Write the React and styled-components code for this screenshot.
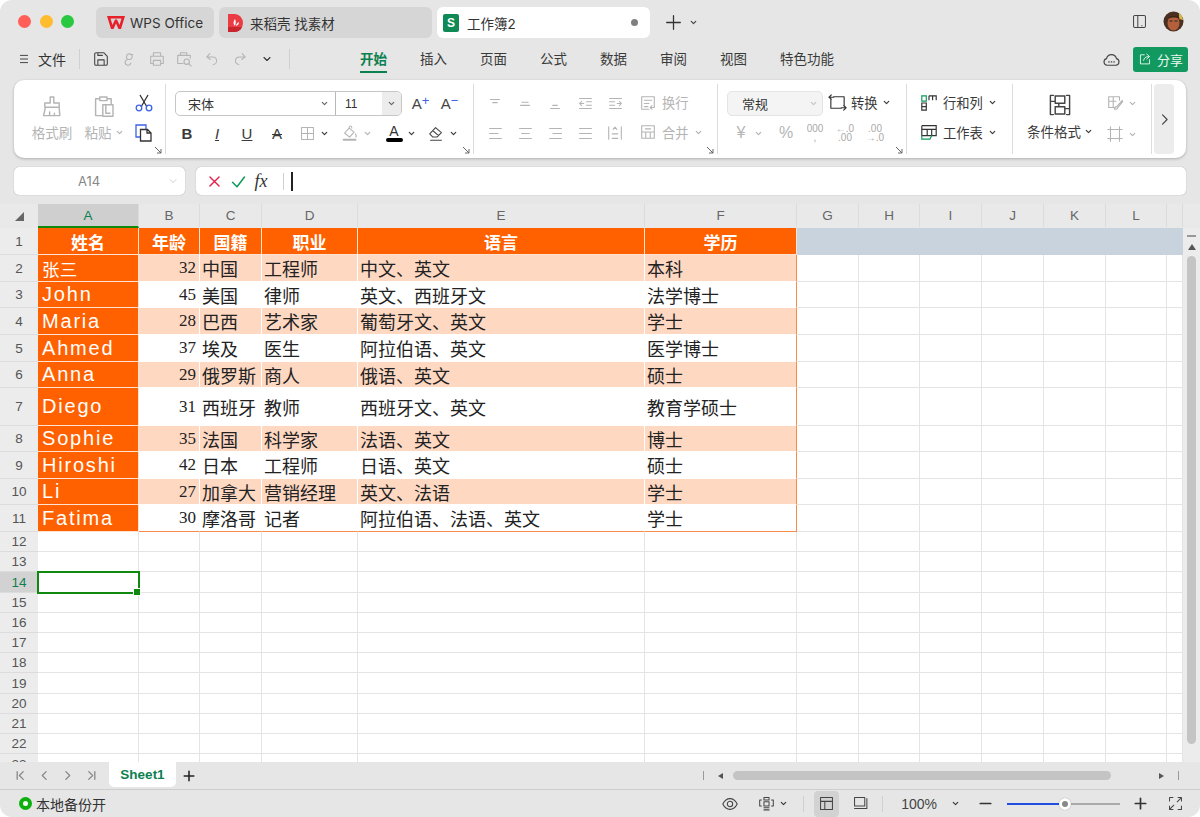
import React from 'react';
import styled, { createGlobalStyle } from 'styled-components';

const CJK = '"Inter", "Noto Sans CJK SC", sans-serif';

const GlobalStyle = createGlobalStyle`
  html, body { margin: 0; padding: 0; background: #fff; }
  * { box-sizing: border-box; }
  body { font-family: ${CJK}; color: #333; }
`;

const ICONS = {
  menu: <path d="M4 4h12M4 10h12M4 16h12" />,
  save: <path d="M3 4.500A1.500 1.500 0 0 1 4.500 3H13l4 4v8.500a1.500 1.500 0 0 1-1.500 1.500h-11A1.500 1.500 0 0 1 3 15.500zM6.500 17v-6h7v6M6.500 3v3h5" />,
  link: <path d="M8 9.500a3.200 3.200 0 1 1 3 1h-2a3.200 3.200 0 1 0 3 4M11 5h3" />,
  print: <path d="M6 7V3h8v4M6 15H3V7h14v8h-3M6 11.500h8V17H6z" />,
  preview: <g><path d="M6 6V3h7v3M9 15H3V6h14v3" /><circle cx="13" cy="13" r="3" /><path d="M15.200 15.200L18 18" /></g>,
  undo: <path d="M8 3L4.500 7 8.500 10M4.500 7H11a4.500 4.500 0 0 1 1 9" />,
  redo: <path d="M12 3l3.500 4-4 3M15.500 7H9a4.500 4.500 0 0 0-1 9" />,
  chevron: <path d="M5 7.500l5 5 5-5" />,
  plus: <path d="M10 2v16M2 10h16" />,
  minus: <path d="M2 10h16" />,
  phone: <path d="M8 3H4.500A1.500 1.500 0 0 0 3 4.500v11A1.500 1.500 0 0 0 4.500 17H8M8 3h7.500A1.500 1.500 0 0 1 17 4.500v11a1.500 1.500 0 0 1-1.500 1.500H8zM12.500 15h.5" />,
  cloud: <g><path d="M5.500 16A3.500 3.500 0 0 1 4.800 9.100 5.300 5.300 0 0 1 15.200 9.100 3.500 3.500 0 0 1 14.500 16z" /><path d="M7 12.500h.6M9.700 12.500h.6M12.400 12.500h.6" /></g>,
  share: <path d="M9 4H3.500v13h13v-6M8 12c.5-3.500 3-5.500 7-5.500M12.500 3L16.500 6.500 12.500 10" />,
  brush: <path d="M8.500 2.500h3v5H16v3.500H4V7.500h4.500zM4.500 11l-1.500 7h13.500l-.500-7M8 18v-3M12 18v-2" />,
  paste: <path d="M6.500 4H3v14h6M6.500 2.500h6v3h-6zM12.500 4H16v4M9 9h8.500v9.500H9zM11.500 9v7h3.500" />,
  border: <path d="M3 3h14v14H3zM10 3v14M3 10h14" />,
  fill: <g><path d="M4 10l5-5.500 5.500 4.500-5 5.500z M9 4.500c0-3 3-3 3 0" /><path d="M16 11c1 1.500 1.500 2.500.5 3.500" /><path d="M3 17.500h13" strokeWidth="2.400" /></g>,
  eraser: <path d="M3 11l6.500-7L16 9.500 11 14.500H6.500zM6.500 7.500L13 13M4 18h12" />,
  alignTop: <path d="M5 5h10M7.500 8.500h5" />,
  alignMid: <path d="M6.500 8h7M5 11.500h10" />,
  alignBot: <path d="M7.500 11.500h5M5 15h10" />,
  outdent: <path d="M3 4h14M3 16h14M11 8h6M11 12h6M8 10H3M5.500 7.500L3 10l2.500 2.500" />,
  indent: <path d="M3 4h14M3 16h14M3 8h6M3 12h6M12 10h5M14.500 7.500L17 10l-2.500 2.500" />,
  left: <path d="M3 4h14M3 10h10M3 16h14" />,
  center: <path d="M3 4h14M5.500 10h9M3 16h14" />,
  right: <path d="M3 4h14M7 10h10M3 16h14" />,
  justify: <path d="M3 4h14M3 10h14M3 16h14" />,
  distribute: <path d="M3 3v14M17 3v14M7 16h6M7 11h6M8 6l2-2.500L12 6" />,
  wrap: <path d="M3 3h14v9M3 3v14h8M6 7h8M6 10.500h5M6 14h4M17 12v3h-4M14.500 13l-2 2 2 2" />,
  merge: <path d="M3 3h14v14H3zM3 10h14M7.500 10v7M12.500 10v7M7 6.500h6" />,
  convert: <path d="M6 4h11v10M14 16H3V6M3.500 2L1 4.500l2.500 2M16.500 18l2.500-2.500-2.500-2.500M1 4.500h5M14 15.500h5" />,
  cond: <path d="M4.500 2H2v16h2.500M15.500 2H18v16h-2.500M6 2.500h8v6H6zM6 11.500h8v6H6zM2 7h4M14 13h4M9 8.500v3" />,
  styleBrush: <path d="M3 3h12v4M3 3v12h6M3 8h8M8 3v12M18 7l-6 7c-1.500 0-2.500 1.500-2.500 3 2 0 3.500-.500 4-2.500l5-6z" />,
  frame: <path d="M5 2v16M15 2v16M2 5h16M2 15h16" />,
  next: <path d="M7 3l7 7-7 7" />,
  eye: <g><path d="M2 10c2-4 5-6 8-6s6 2 8 6c-2 4-5 6-8 6s-6-2-8-6z" /><circle cx="10" cy="10" r="3" /></g>,
  focus: <path d="M7 3h6v3H7zM7 8h6v5H7zM7 15h6M4 6H2v7h2M16 6h2v7h-2M7 17.500h6" />,
  normal: <path d="M3 3h14v14H3zM3 7.500h14M8 7.500V17" />,
  pageView: <path d="M3 3h12v10H3zM17.500 4v12H3" />,
  expand: <path d="M3 7V3h4M13 3h4v4M3 13v4h4M13 17h4v-4M12 8l5-5M8 12l-5 5" />,
  first: <path d="M4 3v14M15 3L8 10l7 7" />,
  prev: <path d="M13 3l-7 7 7 7" />,
  last: <path d="M16 3v14M5 3l7 7-7 7" />,
  cross: <path d="M3 3l14 14M17 3L3 17" />,
  check: <path d="M2 11l6 6L18 4" />,
};

const Glyph = styled.svg`
  flex: none;
  width: ${(p) => p.$s}px;
  height: ${(p) => p.$s}px;
  color: ${(p) => p.$c};
  fill: none;
  stroke: currentColor;
  stroke-width: ${(p) => p.$w};
  stroke-linecap: round;
  stroke-linejoin: round;
`;

const Icon = ({ name, s = 18, c = '#555', w = 1.2 }) => (
  <Glyph viewBox="0 0 20 20" $s={s} $c={c} $w={w}>{ICONS[name]}</Glyph>
);

const OFF = '#b4b4b4';
const ON = '#3a3a3a';

const Caret = ({ c = ON }) => <Icon name="chevron" s={9} c={c} w={2.6} />;

/* window */
const Window = styled.div`
  width: 1200px;
  height: 817px;
  background: #e6e6e6;
  border-radius: 12px;
  overflow: hidden;
  display: flex;
  flex-direction: column;
`;
const Spacer = styled.span`
  flex: none;
  width: ${(p) => p.$w}px;
`;

/* title bar */
const TitleBar = styled.header`
  height: 46px;
  flex: none;
  display: flex;
  align-items: flex-start;
  padding: 7px 16px 0 18px;
`;
const Lights = styled.div`
  display: flex;
  gap: 8.5px;
  margin: 8px 22px 0 0;
`;
const Light = styled.span`
  width: 13px;
  height: 13px;
  border-radius: 50%;
  background: ${(p) => p.$c};
`;
const Tabs = styled.div`
  display: flex;
  gap: 5px;
`;
const Tab = styled.div`
  width: ${(p) => p.$w}px;
  height: 31px;
  border-radius: 6px;
  background: ${(p) => (p.$active ? '#fff' : '#d6d6d6')};
  display: flex;
  align-items: center;
  gap: ${(p) => p.$g}px;
  padding-left: ${(p) => p.$pl}px;
  font-size: 13.5px;
  color: #333;
`;
const SheetBadge = styled.span`
  width: 16px;
  height: 18px;
  border-radius: 2px;
  background: #0f8a55;
  color: #fff;
  font: bold 12px "Liberation Sans", sans-serif;
  display: flex;
  align-items: center;
  justify-content: center;
`;
const TabDot = styled.span`
  width: 7px;
  height: 7px;
  border-radius: 50%;
  background: #808080;
  margin-left: auto;
  margin-right: 12px;
`;
const NewTab = styled.div`
  display: flex;
  align-items: center;
  gap: 7px;
  height: 31px;
  margin-left: 15px;
`;
const TitleRight = styled.div`
  margin-left: auto;
  display: flex;
  align-items: center;
  gap: 15px;
  height: 29px;
`;

/* menu bar */
const MenuBar = styled.nav`
  height: 30px;
  flex: none;
  display: flex;
  align-items: center;
  padding: 0 12px 4px 18px;
`;
const FileMenu = styled.div`
  display: flex;
  align-items: center;
  gap: 8px;
  font-size: 14px;
  width: 61px;
`;
const BarSep = styled.span`
  width: 1px;
  height: ${(p) => p.$h || 20}px;
  background: #d0d0d0;
  flex: none;
  margin-left: ${(p) => p.$ml || 0}px;
`;
const QuickTools = styled.div`
  display: flex;
  align-items: center;
  margin: 0 9px 0 7px;
`;
const QuickSlot = styled.span`
  width: ${(p) => p.$w || 28}px;
  display: flex;
  justify-content: center;
`;
const MenuTabs = styled.div`
  display: flex;
  gap: 33px;
  margin-left: 70px;
  align-self: flex-start;
`;
const MenuTab = styled.div`
  height: 27px;
  line-height: 26px;
  font-size: 13.5px;
  font-weight: ${(p) => (p.$active ? 700 : 400)};
  color: ${(p) => (p.$active ? '#0d8050' : '#3a3a3a')};
  border-bottom: 2px solid ${(p) => (p.$active ? '#0d8050' : 'transparent')};
`;
const MenuRight = styled.div`
  margin-left: auto;
  display: flex;
  align-items: center;
  gap: 12px;
`;
const ShareButton = styled.div`
  width: 55px;
  height: 25px;
  border-radius: 3px;
  background: #11995f;
  color: #e9f7f0;
  font-size: 13px;
  display: flex;
  align-items: center;
  justify-content: center;
  gap: 5px;
`;

/* ribbon */
const Ribbon = styled.section`
  margin: 4px 14px 0;
  height: 78px;
  flex: none;
  background: #fff;
  border-radius: 10px;
  box-shadow: 0 1px 3px rgba(0, 0, 0, 0.25);
  display: flex;
  padding: 4px 0;
`;
const Group = styled.div`
  position: relative;
  width: ${(p) => p.$w}px;
  flex: none;
  border-right: 1px solid #dcdcdc;
  padding: 7px 0 0 ${(p) => p.$pl || 0}px;
  display: flex;
  flex-direction: column;
  gap: 4px;
`;
const GroupRow = styled.div`
  display: flex;
  align-items: center;
  height: ${(p) => p.$h || 25}px;
  margin-left: ${(p) => p.$ml || 0}px;
`;
const Launcher = styled.span`
  position: absolute;
  right: 3px;
  bottom: 0;
  display: flex;
`;
const ClipGroup = styled(Group)`
  flex-direction: row;
  gap: 0;
  padding: 0;
`;
const BigTool = styled.div`
  width: 44px;
  margin-left: ${(p) => p.$ml}px;
  display: flex;
  flex-direction: column;
  align-items: center;
  padding-top: 10px;
  gap: 4px;
  font-size: 13px;
  color: ${OFF};
`;
const LabelRow = styled.div`
  display: flex;
  align-items: center;
  gap: 3px;
  white-space: nowrap;
  font-size: 13.5px;
  color: ${(p) => (p.$on ? ON : OFF)};
`;
const StackTools = styled.div`
  display: flex;
  flex-direction: column;
  align-items: center;
  gap: 10px;
  padding-top: 9px;
  width: 28px;
  margin-left: 4px;
`;
const SideTools = styled.div`
  display: flex;
  flex-direction: column;
  gap: 11px;
  padding-top: 10px;
`;
const FontPicker = styled.div`
  width: 227px;
  height: 25px;
  border: 1px solid #c6c6c6;
  border-radius: 5px;
  display: flex;
  font-size: 13px;
  overflow: hidden;
`;
const FontName = styled.div`
  flex: 1;
  display: flex;
  align-items: center;
  justify-content: space-between;
  padding: 0 6px 0 12px;
  border-right: 1px solid #b8b8b8;
`;
const FontSize = styled.div`
  width: 65px;
  display: flex;
  align-items: center;
  justify-content: space-between;
  font-family: "Liberation Sans", sans-serif;
  font-size: 12px;
  padding-left: 9px;
`;
const SizeArrow = styled.span`
  width: 19px;
  height: 100%;
  background: #ececec;
  display: flex;
  align-items: center;
  justify-content: center;
`;
const GrowText = styled.span`
  width: 29px;
  margin-left: ${(p) => p.$ml || 0}px;
  text-align: center;
  font: 15px "Liberation Sans", sans-serif;
  color: #444;
  & sup {
    font-size: 13px;
    line-height: 0;
    vertical-align: 4px;
    color: #3b63e8;
  }
`;
const Slot = styled.span`
  width: ${(p) => p.$w || 30}px;
  margin-left: ${(p) => p.$ml || 0}px;
  flex: none;
  display: flex;
  justify-content: center;
  align-items: center;
  color: ${(p) => p.$c || '#3a3a3a'};
  font-family: "Liberation Sans", sans-serif;
  font-size: ${(p) => p.$fs || 15}px;
  font-weight: ${(p) => p.$fw || 400};
  font-style: ${(p) => p.$fi || 'normal'};
  text-decoration: ${(p) => p.$td || 'none'};
`;
const Combo = styled.span`
  width: 44px;
  flex: none;
  display: flex;
  align-items: center;
  gap: 4px;
  padding-left: ${(p) => p.$pl}px;
`;
const ColorA = styled.span`
  width: 18px;
  display: flex;
  flex-direction: column;
  align-items: center;
  font: 14px/14px "Liberation Sans", sans-serif;
  color: #333;
  &::after {
    content: '';
    width: 17px;
    height: 4px;
    border-radius: 2px;
    background: #000;
  }
`;
const LabelTool = styled.span`
  display: flex;
  align-items: center;
  gap: ${(p) => p.$g ?? 5}px;
  margin-left: ${(p) => p.$ml || 0}px;
  padding-bottom: 2px;
  font-size: 13.3px;
  color: ${(p) => (p.$on ? ON : OFF)};
  white-space: nowrap;
`;
const FormatSelect = styled.div`
  width: 96px;
  height: 25px;
  margin-left: 9px;
  background: #f4f4f4;
  border: 1px solid #e4e4e4;
  border-radius: 5px;
  display: flex;
  align-items: center;
  justify-content: space-between;
  padding: 0 4px 0 14px;
  font-size: 13px;
`;
const TinyNum = styled.span`
  width: 30px;
  margin-left: ${(p) => p.$ml || 0}px;
  flex: none;
  text-align: center;
  font: 10px/9px "Liberation Sans", sans-serif;
  color: #aaa;
  white-space: pre;
`;
const CondGroup = styled(Group)`
  flex-direction: row;
  gap: 0;
  padding: 0;
`;
const CondMain = styled.div`
  width: 92px;
  margin-left: 1px;
  display: flex;
  flex-direction: column;
  align-items: center;
  padding-top: 9px;
  gap: 4px;
`;
const NextPanel = styled.div`
  width: 20px;
  margin-left: 2px;
  border-radius: 4px;
  background: #ececec;
  display: flex;
  align-items: center;
  justify-content: center;
`;

/* formula bar */
const FormulaRow = styled.div`
  display: flex;
  gap: 11px;
  margin: 9px 14px;
  height: 28px;
  flex: none;
`;
const NameBox = styled.div`
  width: 171px;
  background: #fff;
  border-radius: 5px;
  box-shadow: 0 0 1px rgba(0, 0, 0, 0.4);
  display: flex;
  align-items: center;
  justify-content: space-between;
  padding: 0 6px 0 64px;
  font-size: 13px;
  color: #888;
`;
const FormulaBox = styled.div`
  flex: 1;
  background: #fff;
  border-radius: 5px;
  box-shadow: 0 0 1px rgba(0, 0, 0, 0.4);
  display: flex;
  align-items: center;
  padding-left: 4px;
`;
const FxLabel = styled.span`
  width: 26px;
  text-align: center;
  font: italic 18px "Liberation Serif", serif;
  color: #333;
`;
const TextCaret = styled.span`
  width: 1.5px;
  height: 19px;
  background: #222;
  margin-left: 7px;
`;

/* sheet */
const Sheet = styled.main`
  height: 558px;
  flex: none;
  display: flex;
  overflow: hidden;
  background: #e9e9e9;
`;
const SheetGrid = styled.div`
  width: 1183px;
  flex: none;
  display: grid;
  grid-template-columns: 38px 101px 61px 62px 96px 287px 152px 62px 61px 62px 62px 62px 61px 16px;
  grid-template-rows: 24px 27px 27px 26px 27px 27px 26px 38px 26px 27px 26px 27px 20px 20px 21px 20px 20px 20px 20px 21px 20px 20px 20px 21px;
  background: #fff;
`;
const Corner = styled.div`
  background: #e9e9e9;
  display: flex;
  align-items: center;
  justify-content: center;
  &::before {
    content: '';
    width: 0;
    height: 0;
    border-style: solid;
    border-width: 0 0 9px 9px;
    border-color: transparent transparent #666 transparent;
  }
`;
const ColHead = styled.div`
  background: ${(p) => (p.$sel ? '#cfcfcf' : '#e9e9e9')};
  border-right: 1px solid #dcdcdc;
  border-bottom: 2px solid ${(p) => (p.$sel ? '#0f8a0f' : '#e9e9e9')};
  color: ${(p) => (p.$sel ? '#0d8050' : '#666')};
  font: 13.5px "Liberation Sans", sans-serif;
  display: flex;
  align-items: center;
  justify-content: center;
`;
const RowHead = styled.div`
  background: ${(p) => (p.$sel ? '#d2d2d2' : '#ececec')};
  border-bottom: 1px solid #dcdcdc;
  color: ${(p) => (p.$sel ? '#0d8050' : '#555')};
  font: 13.5px "Liberation Sans", sans-serif;
  display: flex;
  align-items: center;
  justify-content: center;
`;
const Cell = styled.div`
  min-width: 0;
  overflow: visible;
  white-space: nowrap;
  display: flex;
  align-items: center;
  background: #fff;
  border-right: 1px solid #e4e4e4;
  border-bottom: 1px solid #e4e4e4;
`;
const HeadCell = styled(Cell)`
  background: #ff6100;
  color: #fff;
  font: 700 17px "Noto Sans CJK SC", sans-serif;
  justify-content: center;
  border-color: #ffe2d0;
`;
const NameCell = styled(Cell)`
  background: #ff6100;
  color: #fff;
  font: ${(p) => (p.$latin ? 20 : 17.5)}px "Liberation Sans", "Noto Sans CJK SC", sans-serif;
  letter-spacing: ${(p) => (p.$latin ? 1.8 : 0.3)}px;
  padding-left: 4px;
  border-color: #ffe2d0;
`;
const DataCell = styled(Cell)`
  background: ${(p) => (p.$band ? '#ffd8c2' : '#fff')};
  color: #222;
  font: 400 18px "Noto Sans CJK SC", sans-serif;
  padding-left: 2px;
  border-right: 1px solid ${(p) => (p.$edge ? '#f58a4c' : '#fff')};
  border-bottom: 1px solid ${(p) => (p.$last ? '#f58a4c' : '#fff')};
`;
const AgeCell = styled(DataCell)`
  font: 17px "Liberation Serif", serif;
  justify-content: flex-end;
  padding: 0 3px 0 0;
`;
const BlueCell = styled.div`
  grid-column: span 7;
  background: #c9d3de;
`;
const ActiveCell = styled(Cell)`
  position: relative;
  outline: 2px solid #0f8a0f;
  outline-offset: -1px;
  z-index: 1;
  &::after {
    content: '';
    position: absolute;
    right: -3px;
    bottom: -4px;
    width: 6px;
    height: 6px;
    background: #0f8a0f;
    border: 1px solid #fff;
  }
`;

/* scroll rail */
const ScrollRail = styled.aside`
  flex: 1;
  margin-top: 24px;
  padding-top: 7px;
  display: flex;
  flex-direction: column;
  align-items: center;
  background: #ececec;
`;
const RailDash = styled.span`
  width: 9px;
  height: 1.5px;
  background: #999;
`;
const UpArrow = styled.span`
  margin: 7px 0 6px;
  width: 0;
  height: 0;
  border-style: solid;
  border-width: 0 4px 6px;
  border-color: transparent transparent #555;
`;
const RailThumb = styled.span`
  width: 9px;
  height: 488px;
  border-radius: 5px;
  background: #c4c4c4;
`;

/* sheet tabs */
const SheetBar = styled.div`
  height: 28px;
  flex: none;
  border-bottom: 1px solid #cdcdcd;
  display: flex;
  align-items: flex-start;
  padding-left: 9px;
`;
const NavSlot = styled.span`
  width: 23.5px;
  height: 27px;
  display: flex;
  align-items: center;
  justify-content: center;
`;
const SheetTab = styled.div`
  width: 67px;
  height: 25px;
  margin-left: 6px;
  background: #fff;
  border-radius: 0 0 5px 5px;
  color: #0d8050;
  font: 700 13.5px "Liberation Sans", sans-serif;
  display: flex;
  align-items: center;
  justify-content: center;
`;
const AddSheet = styled.span`
  height: 27px;
  display: flex;
  align-items: center;
  margin-left: 7px;
`;
const HScroll = styled.div`
  margin-left: auto;
  margin-right: 21px;
  height: 27px;
  display: flex;
  align-items: center;
`;
const HTick = styled.span`
  width: 1px;
  height: 9px;
  background: #999;
`;
const HArrow = styled.span`
  width: 0;
  height: 0;
  border-style: solid;
  margin: ${(p) => p.$m};
  border-width: ${(p) => (p.$right ? '3.5px 0 3.5px 5px' : '3.5px 5px 3.5px 0')};
  border-color: ${(p) => (p.$right ? 'transparent transparent transparent #555' : 'transparent #555 transparent transparent')};
`;
const HThumb = styled.span`
  width: 378px;
  height: 9px;
  border-radius: 5px;
  background: #c4c4c4;
`;

/* status bar */
const StatusBar = styled.footer`
  flex: 1;
  display: flex;
  align-items: center;
  padding: 0 16px 0 19px;
`;
const BackupDot = styled.span`
  width: 13px;
  height: 13px;
  border-radius: 50%;
  border: 4px solid #0db00d;
  background: #fff;
  margin-right: 4px;
`;
const BackupText = styled.span`
  font-size: 14px;
  color: #333;
`;
const StatusRight = styled.div`
  margin-left: auto;
  display: flex;
  align-items: center;
`;
const ViewButton = styled.span`
  width: 25px;
  height: 26px;
  display: flex;
  align-items: center;
  justify-content: center;
  border-radius: 4px;
  background: ${(p) => (p.$active ? '#d2d2d2' : 'transparent')};
`;
const ZoomLabel = styled.span`
  width: 54px;
  margin-right: 14px;
  text-align: right;
  font: 14px "Liberation Sans", sans-serif;
  color: #444;
`;
const SliderTrack = styled.div`
  width: 113px;
  height: 2px;
  background: #aaa;
  position: relative;
  margin: 0 14px 0 15px;
  display: flex;
`;
const SliderFill = styled.span`
  height: 2px;
  background: #1f4fe0;
`;
const SliderKnob = styled.span`
  position: absolute;
  top: -5px;
  left: 52px;
  width: 12px;
  height: 12px;
  border-radius: 50%;
  background: #888;
  border: 3px solid #fff;
  box-shadow: 0 0 1px rgba(0, 0, 0, 0.4);
`;

const COLUMNS = ['A', 'B', 'C', 'D', 'E', 'F', 'G', 'H', 'I', 'J', 'K', 'L'];
const HEADERS = ['姓名', '年龄', '国籍', '职业', '语言', '学历'];
const PEOPLE = [
  ['张三', 32, '中国', '工程师', '中文、英文', '本科'],
  ['John', 45, '美国', '律师', '英文、西班牙文', '法学博士'],
  ['Maria', 28, '巴西', '艺术家', '葡萄牙文、英文', '学士'],
  ['Ahmed', 37, '埃及', '医生', '阿拉伯语、英文', '医学博士'],
  ['Anna', 29, '俄罗斯', '商人', '俄语、英文', '硕士'],
  ['Diego', 31, '西班牙', '教师', '西班牙文、英文', '教育学硕士'],
  ['Sophie', 35, '法国', '科学家', '法语、英文', '博士'],
  ['Hiroshi', 42, '日本', '工程师', '日语、英文', '硕士'],
  ['Li', 27, '加拿大', '营销经理', '英文、法语', '学士'],
  ['Fatima', 30, '摩洛哥', '记者', '阿拉伯语、法语、英文', '学士'],
];
const MENUS = ['开始', '插入', '页面', '公式', '数据', '审阅', '视图', '特色功能'];
const ZOOM_PERCENT = 50;

const emptyCells = (from, row) =>
  COLUMNS.slice(from).map((c) => <Cell key={`${c}${row}`} />).concat(<Cell key={`end${row}`} />);

const SpreadsheetGrid = () => (
  <SheetGrid>
    <Corner />
    {COLUMNS.map((c, i) => <ColHead key={c} $sel={i === 0}>{c}</ColHead>)}
    <ColHead />

    <RowHead>1</RowHead>
    {HEADERS.map((h) => <HeadCell key={h}>{h}</HeadCell>)}
    <BlueCell />

    {PEOPLE.map((p, i) => {
      const band = i % 2 === 0;
      const last = i === PEOPLE.length - 1;
      return (
        <React.Fragment key={p[0]}>
          <RowHead>{i + 2}</RowHead>
          <NameCell $latin={/^[A-Za-z]/.test(p[0])}>{p[0]}</NameCell>
          <AgeCell $band={band} $last={last}>{p[1]}</AgeCell>
          <DataCell $band={band} $last={last}>{p[2]}</DataCell>
          <DataCell $band={band} $last={last}>{p[3]}</DataCell>
          <DataCell $band={band} $last={last}>{p[4]}</DataCell>
          <DataCell $band={band} $last={last} $edge>{p[5]}</DataCell>
          {emptyCells(6, i + 2)}
        </React.Fragment>
      );
    })}

    {Array.from({ length: 12 }, (_, i) => i + 12).map((row) => (
      <React.Fragment key={row}>
        <RowHead $sel={row === 14}>{row}</RowHead>
        {row === 14 ? <ActiveCell /> : <Cell />}
        {emptyCells(1, row)}
      </React.Fragment>
    ))}
  </SheetGrid>
);

const WpsLogo = () => (
  <svg width="18" height="15" viewBox="0 0 18 15">
    <path d="M0 1h18l-4 13h-2.500L9 8.500 6.500 14H4zM3.500 3.500l2 6.500L8 4.500h2l2.500 5.500 2-6.500z" fill="#e8202a" fillRule="evenodd" />
  </svg>
);
const DaokeLogo = () => (
  <svg width="17" height="20" viewBox="0 0 17 20">
    <path d="M1 1h7a8 9 0 0 1 0 18H1z" fill="#ea3c42" />
    <path d="M1 14h14a8 8 0 0 1-7 5H1z" fill="#c9252c" />
    <path d="M8 13c-2-2-2-4 0-7 1 2 1 4 0 7zm1 0c0-2 1-3 3-4 0 2-1 3-3 4z" fill="#fff" />
  </svg>
);
const Avatar = () => (
  <svg width="21" height="21" viewBox="0 0 21 21">
    <circle cx="10.500" cy="10.500" r="10" fill="#4a3020" />
    <path d="M16 2a10 10 0 0 1 4 7l-4-1z" fill="#d8b64a" />
    <ellipse cx="10.500" cy="12" rx="6" ry="7.500" fill="#b5603c" />
    <path d="M5 8c2-5 10-5 12 0-3-2-9-2-12 0z" fill="#3a2518" />
    <path d="M6.500 10h3M11.500 10h3" stroke="#222" strokeWidth="1.200" />
  </svg>
);
const Scissors = () => (
  <svg width="20" height="20" viewBox="0 0 20 20" fill="none" strokeWidth="1.300">
    <path d="M6 2l7 12M14 2L7 14" stroke="#333" />
    <circle cx="5" cy="15" r="2.800" stroke="#3b63e8" />
    <circle cx="15" cy="15" r="2.800" stroke="#3b63e8" />
  </svg>
);
const CopyIcon = () => (
  <svg width="20" height="20" viewBox="0 0 20 20" fill="none" strokeWidth="1.300">
    <path d="M6 14H2V2h10v4" stroke="#3b63e8" />
    <path d="M6.500 6.500h7l3.500 3.500v8H6.500zM13 6.500V10h4" stroke="#333" fill="#fff" />
  </svg>
);
const RowsIcon = () => (
  <svg width="18" height="18" viewBox="0 0 20 20" fill="none" strokeWidth="1.300">
    <path d="M2 2h5v6H2z" stroke="#0f9a5a" />
    <path d="M2 10h5v8H2zM2 14h5M10 2h8v5M14 2v5M10 2v5" stroke="#333" />
  </svg>
);
const TableIcon = () => (
  <svg width="18" height="18" viewBox="0 0 20 20" fill="none" strokeWidth="1.300">
    <path d="M2 3h16v11h-4M2 3v11h12M2 7h16M8 7v7M13 7v7" stroke="#333" />
    <path d="M2 14v4h9l2-4" stroke="#0f9a5a" />
  </svg>
);
const LauncherIcon = () => (
  <svg width="8" height="8" viewBox="0 0 8 8" fill="none" stroke="#666" strokeWidth="1">
    <path d="M1 1l6 6M7 3v4H3" />
  </svg>
);

const App = () => (
  <>
    <GlobalStyle />
    <Window>
      <TitleBar>
        <Lights>
          <Light $c="#ff5f57" />
          <Light $c="#febc2e" />
          <Light $c="#28c840" />
        </Lights>
        <Tabs>
          <Tab $w={118} $pl={11} $g={5}><WpsLogo />WPS Office</Tab>
          <Tab $w={213} $pl={8} $g={6}><DaokeLogo />来稻壳 找素材</Tab>
          <Tab $w={213} $pl={6} $g={8} $active><SheetBadge>S</SheetBadge>工作簿2<TabDot /></Tab>
        </Tabs>
        <NewTab>
          <Icon name="plus" s={17} c="#333" w={1.5} />
          <Caret c="#444" />
        </NewTab>
        <TitleRight>
          <Icon name="phone" s={17} c="#444" />
          <Avatar />
        </TitleRight>
      </TitleBar>

      <MenuBar>
        <FileMenu><Icon name="menu" s={12} c="#333" w={1.5} />文件</FileMenu>
        <BarSep />
        <QuickTools>
          <QuickSlot><Icon name="save" s={18} c="#444" /></QuickSlot>
          <QuickSlot><Icon name="link" s={18} c={OFF} /></QuickSlot>
          <QuickSlot $w={27}><Icon name="print" s={18} c={OFF} /></QuickSlot>
          <QuickSlot $w={27}><Icon name="preview" s={18} c={OFF} /></QuickSlot>
          <QuickSlot $w={29}><Icon name="undo" s={17} c={OFF} /></QuickSlot>
          <QuickSlot $w={28}><Icon name="redo" s={17} c={OFF} /></QuickSlot>
          <QuickSlot $w={26}><Icon name="chevron" s={12} c="#333" w={1.8} /></QuickSlot>
        </QuickTools>
        <BarSep />
        <MenuTabs>
          {MENUS.map((m, i) => <MenuTab key={m} $active={i === 0}>{m}</MenuTab>)}
        </MenuTabs>
        <MenuRight>
          <Icon name="cloud" s={19} c="#444" />
          <ShareButton><Icon name="share" s={14} c="#fff" />分享</ShareButton>
        </MenuRight>
      </MenuBar>

      <Ribbon>
        <ClipGroup $w={152}>
          <BigTool $ml={16}>
            <Icon name="brush" s={24} c={OFF} />
            <LabelRow>格式刷</LabelRow>
          </BigTool>
          <BigTool $ml={8}>
            <Icon name="paste" s={24} c={OFF} />
            <LabelRow>粘贴<Caret c={OFF} /></LabelRow>
          </BigTool>
          <StackTools>
            <Scissors />
            <CopyIcon />
          </StackTools>
          <Launcher><LauncherIcon /></Launcher>
        </ClipGroup>

        <Group $w={308} $pl={9}>
          <GroupRow>
            <FontPicker>
              <FontName>宋体<Caret c="#666" /></FontName>
              <FontSize>11<SizeArrow><Caret c="#666" /></SizeArrow></FontSize>
            </FontPicker>
            <GrowText $ml={4}>A<sup>+</sup></GrowText>
            <GrowText>A<sup>−</sup></GrowText>
          </GroupRow>
          <GroupRow $h={26} $ml={-3}>
            <Slot $fw={700}>B</Slot>
            <Slot $fi="italic" $td="underline">I</Slot>
            <Slot $td="underline">U</Slot>
            <Slot $td="line-through">A</Slot>
            <Combo $pl={7}><Icon name="border" s={17} c={OFF} /><Caret /></Combo>
            <Combo $pl={5}><Icon name="fill" s={18} c={OFF} /><Caret c={OFF} /></Combo>
            <Combo $pl={5}><ColorA>A</ColorA><Caret /></Combo>
            <Combo $pl={3}><Icon name="eraser" s={18} c="#444" /><Caret /></Combo>
          </GroupRow>
          <Launcher><LauncherIcon /></Launcher>
        </Group>

        <Group $w={244} $pl={6}>
          <GroupRow>
            <Slot><Icon name="alignTop" c={OFF} /></Slot>
            <Slot><Icon name="alignMid" c={OFF} /></Slot>
            <Slot><Icon name="alignBot" c={OFF} /></Slot>
            <Slot><Icon name="outdent" s={17} c={OFF} /></Slot>
            <Slot><Icon name="indent" s={17} c={OFF} /></Slot>
            <LabelTool $ml={9}><Icon name="wrap" c={OFF} />换行</LabelTool>
          </GroupRow>
          <GroupRow $h={26}>
            <Slot><Icon name="left" s={17} c={OFF} /></Slot>
            <Slot><Icon name="center" s={17} c={OFF} /></Slot>
            <Slot><Icon name="right" s={17} c={OFF} /></Slot>
            <Slot><Icon name="justify" s={17} c={OFF} /></Slot>
            <Slot><Icon name="distribute" s={18} c={OFF} /></Slot>
            <LabelTool $ml={9}><Icon name="merge" c={OFF} />合并<Caret c={OFF} /></LabelTool>
          </GroupRow>
          <Launcher><LauncherIcon /></Launcher>
        </Group>

        <Group $w={189}>
          <GroupRow>
            <FormatSelect>常规<Caret c="#c4c4c4" /></FormatSelect>
            <LabelTool $ml={5} $g={4} $on><Icon name="convert" s={19} c="#333" />转换<Caret /></LabelTool>
          </GroupRow>
          <GroupRow $h={26}>
            <Slot $w={26} $ml={10} $c={OFF} $fs={16}>¥</Slot>
            <Slot $w={8}><Caret c={OFF} /></Slot>
            <Slot $w={20} $ml={14} $c={OFF} $fs={16}>%</Slot>
            <TinyNum $ml={4}>{'000\n,'}</TinyNum>
            <TinyNum>{'←.0\n.00'}</TinyNum>
            <TinyNum>{'.00\n→.0'}</TinyNum>
          </GroupRow>
          <Launcher><LauncherIcon /></Launcher>
        </Group>

        <Group $w={106} $pl={13}>
          <GroupRow><LabelTool $on><RowsIcon />行和列<Caret /></LabelTool></GroupRow>
          <GroupRow $h={26}><LabelTool $on><TableIcon />工作表<Caret /></LabelTool></GroupRow>
        </Group>

        <CondGroup $w={139}>
          <CondMain>
            <Icon name="cond" s={24} c="#444" />
            <LabelRow $on>条件格式<Caret /></LabelRow>
          </CondMain>
          <SideTools>
            <LabelTool $g={4}><Icon name="styleBrush" s={18} c={OFF} /><Caret c={OFF} /></LabelTool>
            <LabelTool $g={4}><Icon name="frame" s={18} c={OFF} /><Caret c={OFF} /></LabelTool>
          </SideTools>
        </CondGroup>

        <NextPanel><Icon name="next" s={13} c="#444" w={1.8} /></NextPanel>
      </Ribbon>

      <FormulaRow>
        <NameBox>A14<Icon name="chevron" s={12} c="#bbb" /></NameBox>
        <FormulaBox>
          <Slot $w={28}><Icon name="cross" s={13} c="#e0244e" w={2.2} /></Slot>
          <Slot $w={20}><Icon name="check" s={15} c="#0f9a5a" w={2} /></Slot>
          <FxLabel>fx</FxLabel>
          <BarSep $h={17} $ml={9} />
          <TextCaret />
        </FormulaBox>
      </FormulaRow>

      <Sheet>
        <SpreadsheetGrid />
        <ScrollRail>
          <RailDash />
          <UpArrow />
          <RailThumb />
        </ScrollRail>
      </Sheet>

      <SheetBar>
        <NavSlot><Icon name="first" s={11} c="#888" w={2.4} /></NavSlot>
        <NavSlot><Icon name="prev" s={11} c="#888" w={2.4} /></NavSlot>
        <NavSlot><Icon name="next" s={11} c="#888" w={2.4} /></NavSlot>
        <NavSlot><Icon name="last" s={11} c="#888" w={2.4} /></NavSlot>
        <SheetTab>Sheet1</SheetTab>
        <AddSheet><Icon name="plus" s={12} c="#222" w={2.6} /></AddSheet>
        <HScroll>
          <HTick />
          <HArrow $m="0 10px 0 14px" />
          <HThumb />
          <HArrow $right $m="0 14px 0 48px" />
          <HTick />
        </HScroll>
      </SheetBar>

      <StatusBar>
        <BackupDot />
        <BackupText>本地备份开</BackupText>
        <StatusRight>
          <Icon name="eye" s={18} c="#444" />
          <Spacer $w={19} />
          <Icon name="focus" s={17} c="#444" />
          <Spacer $w={4} />
          <Caret />
          <Spacer $w={15} />
          <BarSep $h={16} />
          <Spacer $w={10} />
          <ViewButton $active><Icon name="normal" s={17} c="#444" /></ViewButton>
          <Spacer $w={9} />
          <ViewButton><Icon name="pageView" s={17} c="#444" /></ViewButton>
          <Spacer $w={9} />
          <BarSep $h={16} />
          <ZoomLabel>100%</ZoomLabel>
          <Caret />
          <Spacer $w={19} />
          <Icon name="minus" s={13} c="#333" w={2.6} />
          <SliderTrack>
            <SliderFill style={{ width: `${ZOOM_PERCENT}%` }} />
            <SliderKnob />
          </SliderTrack>
          <Icon name="plus" s={13} c="#333" w={2.6} />
          <Spacer $w={20} />
          <Icon name="expand" s={17} c="#444" />
        </StatusRight>
      </StatusBar>
    </Window>
  </>
);

export default App;
